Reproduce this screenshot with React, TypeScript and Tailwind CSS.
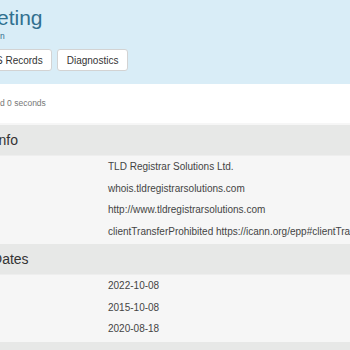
import React from 'react';

const sections = [
  {
    title: 'Registrar Info',
    offset: '-ml-[66px]',
    rows: [
      'TLD Registrar Solutions Ltd.',
      'whois.tldregistrarsolutions.com',
      'http://www.tldregistrarsolutions.com',
      'clientTransferProhibited https://icann.org/epp#clientTransferProhibited',
    ],
  },
  {
    title: 'Important Dates',
    offset: '-ml-[71px]',
    rows: ['2022-10-08', '2015-10-08', '2020-08-18'],
  },
  {
    title: 'Name Servers',
    offset: '-ml-[70px]',
    rows: [],
  },
];

const App: React.FC = () => {
  return (
    <div className="w-[350px] h-[350px] overflow-hidden bg-white font-['Liberation_Sans',Arial,sans-serif]">
      {/* header band */}
      <div className="bg-[#d9edf7] h-[84px] overflow-hidden">
        <h1 className="-ml-[3px] pt-[5px] text-[21px] leading-[25px] text-[#31708f] whitespace-nowrap">eting</h1>
        <p className="mt-[1px] text-[8.5px] leading-[10px] text-[#31708f]">n</p>
        <div className="flex gap-[5px] mt-[8px]">
          <button className="-ml-[14px] h-[22px] pl-[9px] pr-[8px] bg-white border border-[#d3d3d3] rounded-[3px] text-[10px] text-[#333] whitespace-nowrap">
            S Records
          </button>
          <button className="h-[22px] px-[9px] bg-white border border-[#d3d3d3] rounded-[3px] text-[10px] text-[#333] whitespace-nowrap">
            Diagnostics
          </button>
        </div>
      </div>

      <div className="h-[39px] flex items-center text-[8.5px] text-[#777] whitespace-nowrap">d 0 seconds</div>

      {/* whois panels */}
      <div className="bg-[#f6f6f6] pt-[2px] flex flex-col gap-[2px]">
        {sections.map((s) => (
          <div key={s.title}>
            <div className="h-[31px] flex items-center bg-[#e7e8e7] border-b border-[#eeeeee] text-[14px] text-[#333] whitespace-nowrap overflow-hidden">
              <span className={s.offset}>{s.title}</span>
            </div>
            {s.rows.map((r) => (
              <div key={r} className="h-[21.5px] flex items-center pl-[108px] text-[10px] text-[#444] whitespace-nowrap">
                {r}
              </div>
            ))}
          </div>
        ))}
      </div>
    </div>
  );
};

export default App;
